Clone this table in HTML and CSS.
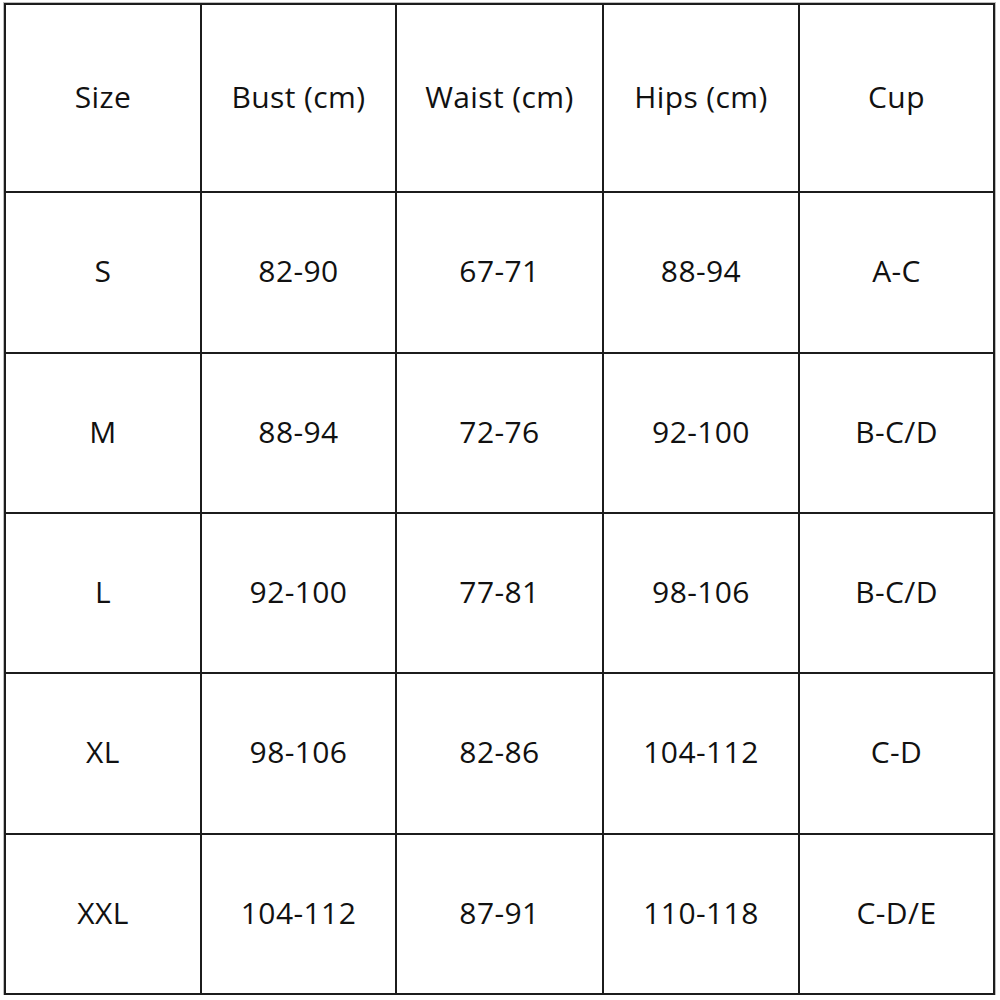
FILE: index.html
```html
<!DOCTYPE html>
<html>
<head>
<meta charset="utf-8">
<link rel="stylesheet" href="styles.css">
</head>
<body>
<div class="chart">
  <div class="cell">Size</div><div class="cell">Bust (cm)</div><div class="cell">Waist (cm)</div><div class="cell">Hips (cm)</div><div class="cell">Cup</div>
  <div class="cell">S</div><div class="cell">82-90</div><div class="cell">67-71</div><div class="cell">88-94</div><div class="cell">A-C</div>
  <div class="cell">M</div><div class="cell">88-94</div><div class="cell">72-76</div><div class="cell">92-100</div><div class="cell">B-C/D</div>
  <div class="cell">L</div><div class="cell">92-100</div><div class="cell">77-81</div><div class="cell">98-106</div><div class="cell">B-C/D</div>
  <div class="cell">XL</div><div class="cell">98-106</div><div class="cell">82-86</div><div class="cell">104-112</div><div class="cell">C-D</div>
  <div class="cell">XXL</div><div class="cell">104-112</div><div class="cell">87-91</div><div class="cell">110-118</div><div class="cell">C-D/E</div>
</div>
</body>
</html>
```
FILE: styles.css
```css
html, body {
  margin: 0;
  padding: 0;
  background: #fff;
}
body {
  padding: 3px 0 0 4px;
}
.chart {
  display: grid;
  grid-template-columns: 194px 193px 205px 194px 193px;
  grid-template-rows: 186px 159px 158px 158px 159px 158px;
  gap: 2px;
  padding: 2px;
  width: max-content;
  background: #1c1c1c;
  box-shadow: 0 0 0 1px #bdbdbd;
}
.cell {
  background: #fff;
  display: flex;
  align-items: center;
  justify-content: center;
  padding-bottom: 4px;
  font-family: "Open Sans", "Noto Sans", sans-serif;
  font-size: 30px;
  font-weight: 500;
  color: #111;
  letter-spacing: 0.4px;
}
```
